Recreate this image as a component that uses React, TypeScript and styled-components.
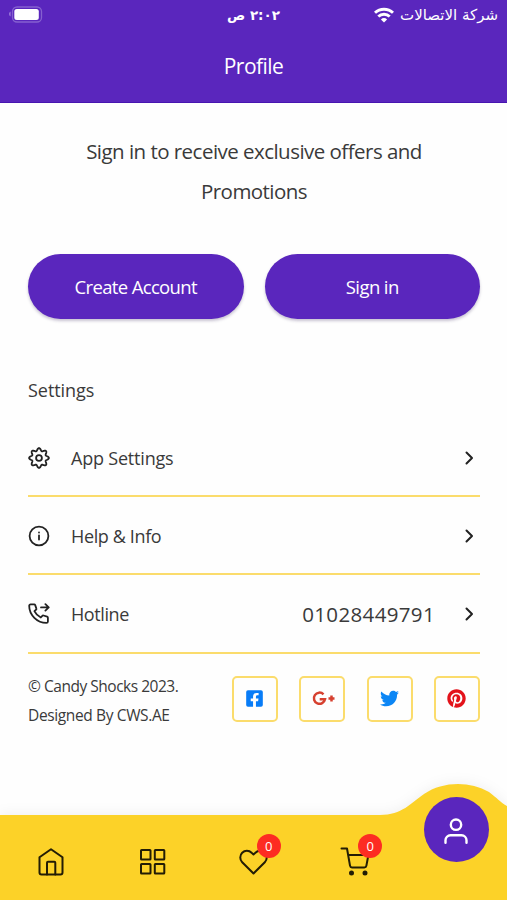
import React from 'react';
import styled, { createGlobalStyle } from 'styled-components';
import { FaFacebookSquare, FaTwitter, FaPinterest } from 'react-icons/fa';

const PURPLE = '#5a26bd';
const YELLOW = '#fcd228';
const INK = '#3a3a3a';

const GlobalStyle = createGlobalStyle`
  * { box-sizing: border-box; }
  body { margin: 0; background: #fefefe; font-family: "Open Sans", "Noto Sans", sans-serif; color: ${INK}; }
  button { font-family: inherit; border: 0; padding: 0; background: none; }
`;

const Screen = styled.div`
  width: 507px;
  height: 900px;
  display: flex;
  flex-direction: column;
  overflow: hidden;
  background: #fefefe;
`;

const Txt = styled.span<{ $size: number; $track?: number }>`
  font-size: ${p => p.$size}px;
  letter-spacing: ${p => p.$track ?? 0}px;
  white-space: nowrap;
`;

const Header = styled.header`
  height: 103px;
  background: ${PURPLE};
  color: #fff;
  border-bottom: 1px solid #4715b0;
`;

const StatusBar = styled.div`
  height: 29px;
  padding: 0 9px;
  display: grid;
  grid-template-columns: 1fr auto 1fr;
  align-items: center;
`;

const Carrier = styled.div`
  display: flex;
  justify-content: flex-end;
  align-items: center;
  gap: 6px;
`;

const Arabic = styled.span<{ $size: number; $weight?: number }>`
  font-family: "DejaVu Sans", sans-serif;
  font-size: ${p => p.$size}px;
  font-weight: ${p => p.$weight ?? 400};
  line-height: 20px;
  white-space: nowrap;
`;

const Title = styled.h1`
  margin: 0;
  height: 74px;
  line-height: 74px;
  text-align: center;
  font-weight: 400;
  font-size: 0;
`;

const Content = styled.main`
  padding: 28px 27px 0 28px;
`;

const Intro = styled.p`
  margin: 0;
  text-align: center;
  line-height: 40px;
  display: flex;
  flex-direction: column;
`;

const Actions = styled.div`
  margin-top: 43px;
  display: grid;
  grid-template-columns: 1fr 1fr;
  gap: 21px;
`;

const Pill = styled.button`
  height: 65px;
  border-radius: 33px;
  background: ${PURPLE};
  color: #fff;
  box-shadow: 0 2px 3px rgba(40, 20, 80, 0.25);
`;

const SectionTitle = styled.h2`
  margin: 56px 0 14px;
  height: 30px;
  line-height: 30px;
  display: flex;
  font-weight: 400;
`;

const Row = styled.div`
  height: 78.2px;
  padding-top: 1px;
  border-bottom: 2px solid #fbdc6c;
  display: flex;
  align-items: center;
`;

const RowIcon = styled.div`
  width: 43px;
  display: flex;
`;

const RowLabel = styled.div`
  flex: 1;
  display: flex;
`;

const Chevron = styled.div`
  width: 45px;
  padding-right: 6px;
  display: flex;
  justify-content: flex-end;
`;

const Footer = styled.div`
  margin-top: 17px;
  display: flex;
  justify-content: space-between;
`;

const Legal = styled.div`
  display: flex;
  flex-direction: column;
  line-height: 29.5px;
  padding-top: 1px;
`;

const Socials = styled.div`
  display: flex;
  gap: 21.3px;
  padding-top: 5px;
`;

const Social = styled.div<{ $color: string }>`
  width: 46px;
  height: 46px;
  padding-right: 1px;
  border: 2px solid #fbdc6c;
  border-radius: 5px;
  color: ${p => p.$color};
  display: flex;
  align-items: center;
  justify-content: center;
`;

const Nav = styled.nav`
  position: relative;
  margin-top: auto;
  height: 116px;
  display: grid;
  grid-template-columns: repeat(5, 1fr);
`;

const NavShape = styled.svg`
  position: absolute;
  inset: 0;
  overflow: visible;
  filter: drop-shadow(0 -2px 6px rgba(0, 0, 0, 0.05));
`;

const NavItem = styled.div`
  position: relative;
  display: flex;
  justify-content: center;
  padding-top: 63px;
`;

const Badge = styled.span`
  position: absolute;
  top: 50px;
  left: 54px;
  width: 24px;
  height: 24px;
  border-radius: 50%;
  background: #fd2c22;
  color: #fff;
  text-align: center;
  line-height: 25px;
  font-size: 13px;
`;

const Profile = styled.div`
  position: relative;
  justify-self: center;
  margin-top: 13px;
  padding-top: 2px;
  width: 65px;
  height: 65px;
  border-radius: 50%;
  background: ${PURPLE};
  display: flex;
  align-items: center;
  justify-content: center;
`;

type StrokeProps = { size?: number; color?: string; width?: number; children: React.ReactNode };
const Line = ({ size = 22, color = '#222', width = 1.8, children }: StrokeProps) => (
  <svg width={size} height={size} viewBox={`0 0 ${size} ${size}`} fill="none" stroke={color}
    strokeWidth={width} strokeLinecap="round" strokeLinejoin="round">{children}</svg>
);

// Closed outline with eight rounded teeth, sampled every three degrees.
const gearOutline = Array.from({ length: 120 }, (_, i) => {
  const a = (i * Math.PI) / 60;
  const r = 8.55 + 1.35 * Math.cos(8 * a);
  return `${(11 + r * Math.sin(a)).toFixed(2)},${(11 - r * Math.cos(a)).toFixed(2)}`;
}).join(' ');

const Gear = () => (
  <Line width={1.8}>
    <circle cx="11" cy="11" r="2.9" />
    <polygon points={gearOutline} />
  </Line>
);

const Info = () => (
  <Line>
    <circle cx="11" cy="11" r="9.4" />
    <path d="M11 10.5v4" />
    <path d="M11 7.4v.1" />
  </Line>
);

const Hotline = () => (
  <Line>
    <path d="M2.6 1.3h3.6c.5 0 .8.3 1 .8l1.2 3.5c.2.5 0 .9-.4 1.2L6.4 8.1c1.4 2.9 3.4 4.9 6.4 6.4l1.5-1.6c.3-.4.8-.5 1.2-.4l3.6 1.2c.5.2.8.5.8 1v3.7c0 .9-.7 1.5-1.5 1.5C9.2 19.900 1.200 12 1.200 2.800c0-.8.6-1.500 1.400-1.500z" />
    <path d="M13 4.400h7.600M17.400 1.200l3.300 3.200-3.300 3.200" />
  </Line>
);

const ChevronRight = () => (
  <svg width="9" height="14" viewBox="0 0 9 14" fill="none" stroke="#222" strokeWidth="2"
    strokeLinecap="round" strokeLinejoin="round"><path d="M1.5 1.5 7 7l-5.5 5.5" /></svg>
);

const GooglePlus = () => (
  <svg width="24" height="16" viewBox="-1.500 0 24 16" overflow="visible" fill="none" stroke="#d6402f" strokeWidth="2.500">
    <path d="M12 3.300A5.600 5.600 0 1 0 13.500 8.300H8.200" />
    <path d="M17 7.500h6M20 4.500v6" />
  </svg>
);

const Home = () => (
  <Line size={30} color="#231d05" width={2}>
    <path d="M3.500 10.300 15 2.200l11.500 8.100V25.500a2 2 0 0 1-2 2H5.500a2 2 0 0 1-2-2z" />
    <path d="M11 27.500V15.700a1 1 0 0 1 1-1h6.300a1 1 0 0 1 1 1v11.800" />
  </Line>
);

const Grid = () => (
  <Line size={30} color="#231d05" width={2}>
    {[[4, 3], [17.8, 3], [4, 17], [17.8, 17]].map(([x, y]) => (
      <rect key={`${x}-${y}`} x={x} y={y} width="9.500" height="9.500" rx="0.600" />
    ))}
  </Line>
);

const Heart = () => (
  <Line size={30} color="#231d05" width={2}>
    <path d="M15.500 26.500 4.200 15.200a6.800 6.800 0 0 1 0-9.500 6.500 6.500 0 0 1 9.400 0L15.500 7.400 17.400 5.700a6.500 6.500 0 0 1 9.400 0 6.800 6.800 0 0 1 0 9.500z" />
  </Line>
);

const Cart = () => (
  <Line size={30} color="#231d05" width={2}>
    <path d="M1.500 1.500H7l3 17.200c.2 1.200.9 1.800 2 1.800h12.300c1.200 0 1.900-.6 2.100-1.800l2-10.700H8.200" />
    <circle cx="11.500" cy="26" r="1.500" fill="#231d05" />
    <circle cx="25" cy="26" r="1.500" fill="#231d05" />
  </Line>
);

const Person = () => (
  <Line size={28} color="#fff" width={2.4}>
    <circle cx="14" cy="7.700" r="5.200" />
    <path d="M3.500 25.800v-2.500a5 5 0 0 1 5-5h11a5 5 0 0 1 5 5v2.500" />
  </Line>
);

const Battery = () => (
  <svg width="34" height="17" viewBox="0 0 34 17">
    <path d="M1.500 5.500v5a3 3 0 0 1 0-5z" fill="#a98be0" />
    <rect x="3.500" y="1" width="29" height="15" rx="4.500" fill="none" stroke="#8560cf" strokeWidth="1.300" />
    <rect x="5.300" y="3" width="24.500" height="11" rx="2.500" fill="#fff" />
  </svg>
);

const Wifi = () => (
  <svg width="20" height="16" viewBox="0 0 20 16" fill="none" stroke="#fff" strokeWidth="2.900">
    <path d="M1 5.800a13 13 0 0 1 18 0" />
    <path d="M4.300 9.500a8.200 8.200 0 0 1 11.400 0" />
    <path d="M10 15.500 6.900 12.500a4.500 4.500 0 0 1 6.200 0z" fill="#fff" stroke="none" />
  </svg>
);

const rows = [
  { label: 'App Settings', icon: <Gear />, track: -0.2 },
  { label: 'Help & Info', icon: <Info />, track: -0.37 },
  { label: 'Hotline', icon: <Hotline />, track: -0.4, value: '01028449791' },
];

const socials = [
  { color: '#087cf7', icon: <FaFacebookSquare size={19} /> },
  { color: '#d6402f', icon: <GooglePlus /> },
  { color: '#0c86f5', icon: <FaTwitter size={19} /> },
  { color: '#e3131b', icon: <FaPinterest size={19} /> },
];

export default function App() {
  return (
    <Screen>
      <GlobalStyle />
      <Header>
        <StatusBar>
          <Battery />
          <Arabic dir="rtl" $size={13.5} $weight={700}>٢:٠٢ ص</Arabic>
          <Carrier>
            <Wifi />
            <Arabic dir="rtl" $size={15}>شركة الاتصالات</Arabic>
          </Carrier>
        </StatusBar>
        <Title><Txt $size={21} $track={-0.55}>Profile</Txt></Title>
      </Header>
      <Content>
        <Intro>
          <Txt $size={20.5} $track={-0.53}>Sign in to receive exclusive offers and</Txt>
          <Txt $size={20.5} $track={-0.55}>Promotions</Txt>
        </Intro>
        <Actions>
          <Pill><Txt $size={18.5} $track={-0.66}>Create Account</Txt></Pill>
          <Pill><Txt $size={18.5} $track={-0.6}>Sign in</Txt></Pill>
        </Actions>
        <SectionTitle><Txt $size={18} $track={-0.05}>Settings</Txt></SectionTitle>
        {rows.map(r => (
          <Row key={r.label}>
            <RowIcon>{r.icon}</RowIcon>
            <RowLabel><Txt $size={18} $track={r.track}>{r.label}</Txt></RowLabel>
            {r.value && <Txt $size={20.5} $track={0.35}>{r.value}</Txt>}
            <Chevron><ChevronRight /></Chevron>
          </Row>
        ))}
        <Footer>
          <Legal>
            <Txt $size={15.5} $track={-0.48}>© Candy Shocks 2023.</Txt>
            <Txt $size={15.5} $track={-0.37}>Designed By CWS.AE</Txt>
          </Legal>
          <Socials>
            {socials.map((s, i) => <Social key={i} $color={s.color}>{s.icon}</Social>)}
          </Socials>
        </Footer>
      </Content>
      <Nav>
        <NavShape width="507" height="116" viewBox="0 0 507 116">
          <path fill={YELLOW} d="M0 31H380C402 31 411 19 424 10C443-3 470-3 489 8C496 13 501 19 507 22V116H0z" />
        </NavShape>
        <NavItem><Home /></NavItem>
        <NavItem><Grid /></NavItem>
        <NavItem><Heart /><Badge>0</Badge></NavItem>
        <NavItem><Cart /><Badge>0</Badge></NavItem>
        <Profile><Person /></Profile>
      </Nav>
    </Screen>
  );
}
